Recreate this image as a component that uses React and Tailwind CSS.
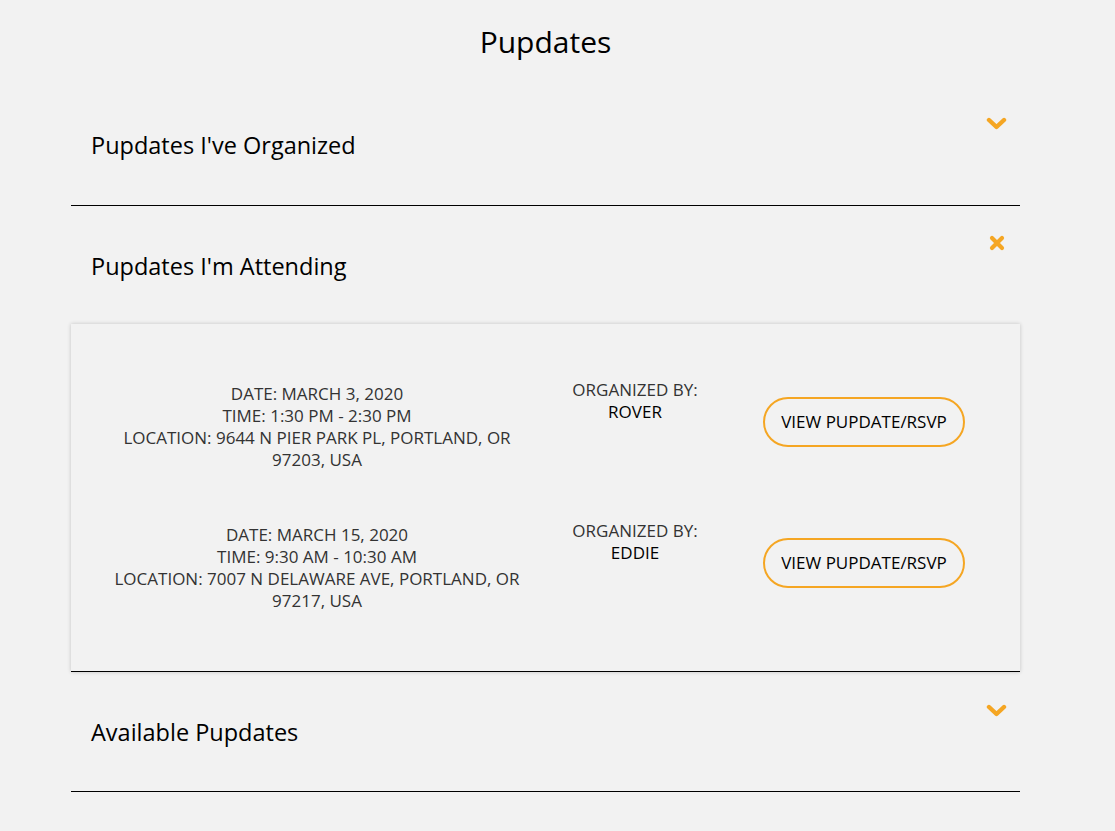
import React, { useState } from 'react';

const pupdates = [
  {
    date: 'MARCH 3, 2020',
    time: '1:30 PM - 2:30 PM',
    location: '9644 N PIER PARK PL, PORTLAND, OR 97203, USA',
    organizer: 'ROVER',
  },
  {
    date: 'MARCH 15, 2020',
    time: '9:30 AM - 10:30 AM',
    location: '7007 N DELAWARE AVE, PORTLAND, OR 97217, USA',
    organizer: 'EDDIE',
  },
];

const Chevron = () => (
  <svg width="21" height="13" viewBox="0 0 21 13" fill="none">
    <path d="M3 3 L10.5 10 L18 3" stroke="#f5a623" strokeWidth="4.4" strokeLinecap="round" strokeLinejoin="round" />
  </svg>
);

const Cross = () => (
  <svg width="16" height="16" viewBox="0 0 16 16" fill="none">
    <path d="M3 3 L13 13 M13 3 L3 13" stroke="#f5a623" strokeWidth="4.2" strokeLinecap="round" />
  </svg>
);

const SectionHeader = ({ title, open, onToggle, height }) => (
  <div className={`flex justify-between pl-5 pr-[13px] ${height}`}>
    <h2 className="pt-[44px] text-[23.5px] leading-[33px] text-black">{title}</h2>
    <button onClick={onToggle} className={open ? 'mt-[29px] mr-[2px] h-4 w-4' : 'mt-[32px] h-[13px] w-[21px]'}>
      {open ? <Cross /> : <Chevron />}
    </button>
  </div>
);

const PupdateRow = ({ p }) => (
  <div className="flex items-start pl-[31px]">
    <div className="w-[430px] pt-1 text-center text-[17px] leading-[22px] text-[#333]">
      <p>DATE: {p.date}</p>
      <p>TIME: {p.time}</p>
      <p>LOCATION: {p.location}</p>
    </div>
    <div className="ml-[23px] w-[160px] text-center text-[17px] leading-[22px]">
      <p className="text-[#333]">ORGANIZED BY:</p>
      <p className="text-black">{p.organizer}</p>
    </div>
    <button className="ml-[48px] mt-[18px] h-[50px] w-[202px] rounded-full border-2 border-[#f5a623] text-[17px] text-black">
      VIEW PUPDATE/RSVP
    </button>
  </div>
);

export default function App() {
  const [open, setOpen] = useState('attending');
  const toggle = (key) => setOpen(open === key ? null : key);

  return (
    <div className="min-h-screen bg-[#f2f2f2] font-['Open_Sans',sans-serif]">
      <div className="ml-[71px] w-[949px] pt-[21px]">
        <h1 className="text-center text-[30px] leading-[41px] text-black">Pupdates</h1>

        <div className="mt-[23px] border-b border-black">
          <SectionHeader
            title="Pupdates I've Organized"
            height="h-[120px]"
            open={open === 'organized'}
            onToggle={() => toggle('organized')}
          />
        </div>

        <div>
          <SectionHeader
            title="Pupdates I'm Attending"
            height="h-[118px]"
            open={open === 'attending'}
            onToggle={() => toggle('attending')}
          />
          <div className="flex flex-col gap-[49px] border-b border-black bg-[#f2f2f2] pt-[55px] pb-[59px] shadow-[0_0_4px_rgba(0,0,0,0.2)]">
            {pupdates.map((p) => (
              <PupdateRow key={p.date} p={p} />
            ))}
          </div>
        </div>

        <div className="border-b border-black">
          <SectionHeader
            title="Available Pupdates"
            height="h-[119px]"
            open={open === 'available'}
            onToggle={() => toggle('available')}
          />
        </div>
      </div>
    </div>
  );
}
